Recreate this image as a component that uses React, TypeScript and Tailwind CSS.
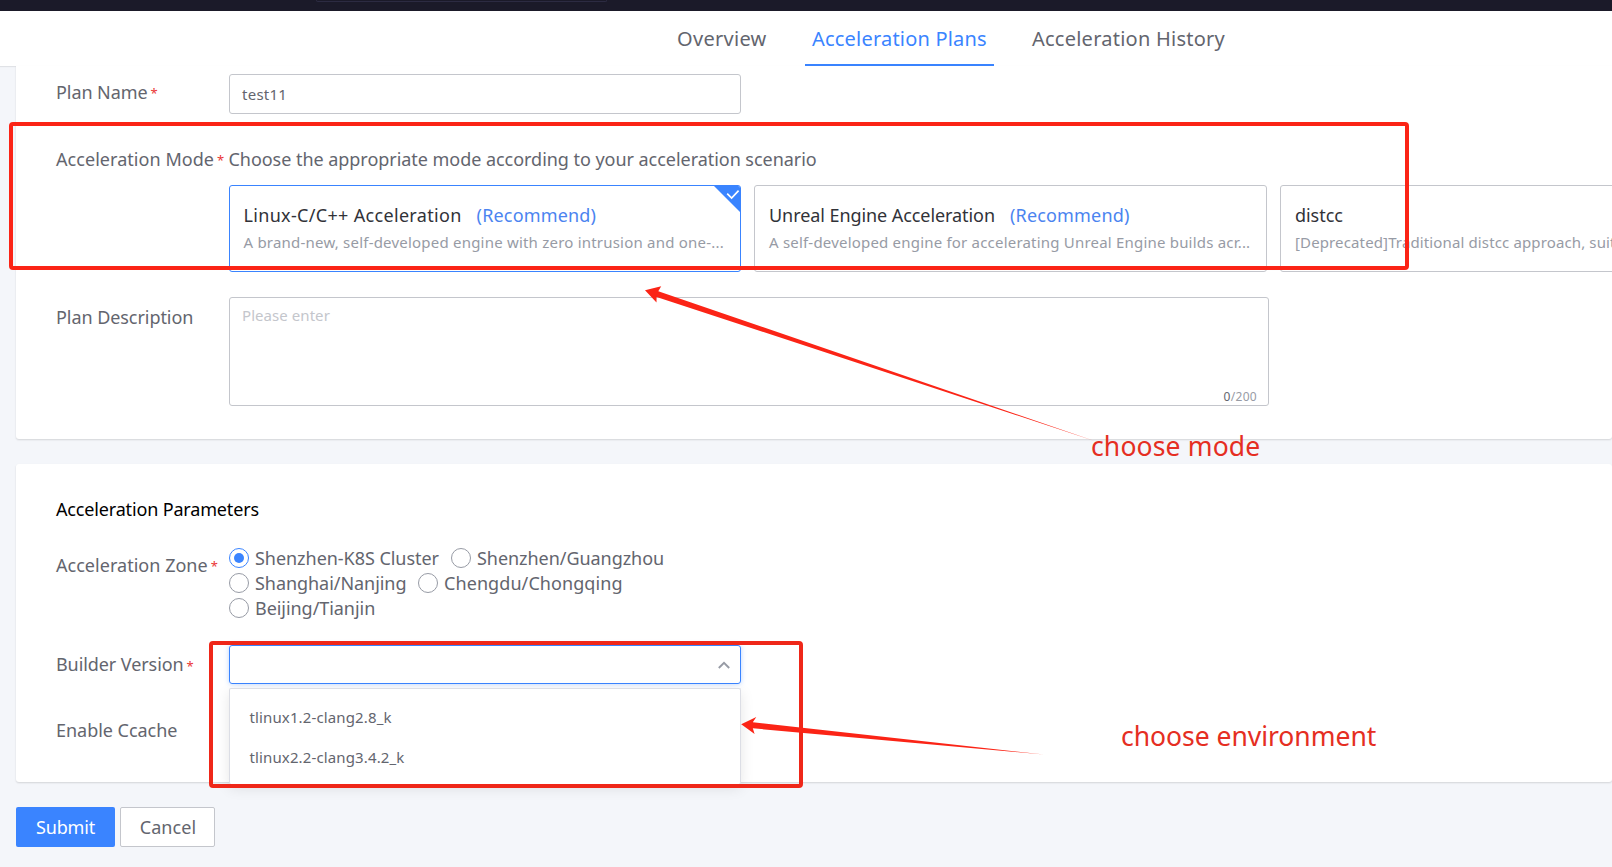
import React from "react";

const tabs = [
  { name: "Overview", box: "w-[105px]", text: "tracking-[0.3px] pl-2", active: false },
  { name: "Acceleration Plans", box: "w-[189px]", text: "tracking-[0.2px] pl-[7px]", active: true },
  { name: "Acceleration History", box: "w-[208px]", text: "tracking-[0.24px] pl-[7px]", active: false },
];

const modes = [
  {
    title: "Linux-C/C++ Acceleration",
    titleClass: "tracking-[0.32px]",
    recommend: true,
    desc: "A brand-new, self-developed engine with zero intrusion and one-...",
    descClass: "tracking-[0.21px]",
    selected: true,
  },
  {
    title: "Unreal Engine Acceleration",
    titleClass: "tracking-[-0.07px]",
    recommend: true,
    desc: "A self-developed engine for accelerating Unreal Engine builds acr...",
    descClass: "tracking-[0.2px]",
    selected: false,
  },
  {
    title: "distcc",
    titleClass: "tracking-[-0.05px]",
    recommend: false,
    desc: "[Deprecated]Traditional distcc approach, suitable for C/C++ builds",
    descClass: "tracking-[0.13px]",
    selected: false,
  },
];

const zones = [
  [
    { name: "Shenzhen-K8S Cluster", text: "w-[184px] tracking-[-0.04px]", checked: true },
    { name: "Shenzhen/Guangzhou", text: "tracking-[-0.05px]", checked: false },
  ],
  [
    { name: "Shanghai/Nanjing", text: "w-[151px] tracking-[-0.05px]", checked: false },
    { name: "Chengdu/Chongqing", text: "tracking-[0.08px]", checked: false },
  ],
  [{ name: "Beijing/Tianjin", text: "tracking-[-0.05px]", checked: false }],
];

const versions = ["tlinux1.2-clang2.8_k", "tlinux2.2-clang3.4.2_k"];

function Label({ text, required, className = "" }: { text: string; required?: boolean; className?: string }) {
  return (
    <div className={`flex w-[174px] shrink-0 items-center whitespace-nowrap pl-px ${className}`}>
      <span>{text}</span>
      {required && <span className="ml-[3px] pt-1 text-[13px] tracking-normal text-[#ea3636]">*</span>}
    </div>
  );
}

function Radio({ checked }: { checked: boolean }) {
  return (
    <span
      className={`flex size-5 shrink-0 items-center justify-center rounded-full border bg-white ${
        checked ? "border-[#3a84ff]" : "border-[#979ba5]"
      }`}
    >
      {checked && <span className="size-[10px] rounded-full bg-[#3a84ff]" />}
    </span>
  );
}

export default function App() {
  return (
    <div className="relative h-[867px] w-full overflow-hidden bg-[#f4f6fa] font-['Noto_Sans',sans-serif] text-[18px] text-[#63656e]">
      <header className="h-[11px] bg-[#1b1a29] pl-[316px]">
        <div className="h-[2px] w-[291px] rounded-b-sm border-x border-b border-[#2c2b42]" />
      </header>

      <nav className="flex h-[55px] gap-[31px] bg-white pl-[669px] text-[20px] shadow-[0_1px_1px_rgba(0,0,0,0.08)]">
        {tabs.map((tab) => (
          <a
            key={tab.name}
            className={`flex h-[55px] items-start whitespace-nowrap border-b-2 pt-[13px] leading-[30px] ${tab.box} ${tab.text} ${
              tab.active ? "border-[#3a84ff] text-[#3a84ff]" : "border-transparent"
            }`}
          >
            {tab.name}
          </a>
        ))}
      </nav>

      <main className="relative ml-4">
        <section className="h-[373px] rounded-b-[3px] bg-white pl-[39px] pt-2 shadow-[0_1px_2px_rgba(0,0,0,0.14)]">
          <div className="flex">
            <Label text="Plan Name" required className="h-9 tracking-[-0.07px]" />
            <div className="flex h-10 w-[512px] items-center rounded-[3px] border border-[#c4c6cc] pl-3 text-[15px] tracking-[0.25px]">
              test11
            </div>
          </div>

          <div className="mt-[27px] flex">
            <Label text="Acceleration Mode" required className="h-9 tracking-[0.05px]" />
            <div className="min-w-0 flex-1">
              <p className="-ml-[0.5px] h-9 whitespace-nowrap leading-9 tracking-[-0.04px]">
                Choose the appropriate mode according to your acceleration scenario
              </p>
              <div className="mt-2 flex gap-[13px]">
                {modes.map((mode) => (
                  <div
                    key={mode.title}
                    className={`relative h-[87px] shrink-0 overflow-hidden rounded-[3px] border pt-[15px] ${
                      mode.selected ? "w-[512px] border-[#3a84ff] pl-[13.5px]" : "w-[513px] border-[#c4c6cc] pl-[14px]"
                    }`}
                  >
                    <div className="flex h-7 items-center gap-4 whitespace-nowrap">
                      <span className={`text-[#313238] ${mode.titleClass}`}>{mode.title}</span>
                      {mode.recommend && <span className="-ml-px tracking-[0.17px] text-[#4b84f0]">(Recommend)</span>}
                    </div>
                    <div className={`h-[26px] whitespace-nowrap text-[15px] leading-[26px] text-[#979ba5] ${mode.descClass}`}>
                      {mode.desc}
                    </div>
                    {mode.selected && (
                      <svg className="absolute -right-px top-0" width="27" height="27" viewBox="0 0 27 27">
                        <path d="M0 0H27V27Z" fill="#3a84ff" />
                        <path d="M13.2 7.6L17.6 12L24.6 4.6" fill="none" stroke="#fff" strokeWidth="1.7" />
                      </svg>
                    )}
                  </div>
                ))}
              </div>
            </div>
          </div>

          <div className="mt-[25px] flex">
            <Label text="Plan Description" className="mt-0.5 h-9 tracking-[-0.06px]" />
            <div className="flex h-[109px] w-[1040px] flex-col justify-between rounded-[3px] border border-[#c4c6cc] pl-3 pr-[11px] pt-[5px]">
              <span className="text-[15px] leading-6 tracking-[0.06px] text-[#c4c6cc]">Please enter</span>
              <span className="self-end text-[12px] leading-4 tracking-[0.3px] text-[#979ba5]">
                <span className="text-[#63656e]">0</span>/200
              </span>
            </div>
          </div>
        </section>

        <section className="mt-[25px] h-[318px] rounded-[3px] bg-white pl-[39px] pt-[33px] shadow-[0_1px_2px_rgba(0,0,0,0.14)]">
          <h2 className="h-6 pl-px leading-6 tracking-[-0.16px] text-black">Acceleration Parameters</h2>

          <div className="mt-[27px] flex">
            <Label text="Acceleration Zone" required className="h-[34px] tracking-[0.03px]" />
            <div className="flex flex-col gap-[5px]">
              {zones.map((row, i) => (
                <div key={i} className="flex gap-3">
                  {row.map((zone) => (
                    <label key={zone.name} className="flex h-5 items-center gap-[6px] whitespace-nowrap leading-5">
                      <Radio checked={zone.checked} />
                      <span className={zone.text}>{zone.name}</span>
                    </label>
                  ))}
                </div>
              ))}
            </div>
          </div>

          <div className="mt-[27px] flex h-[39px]">
            <Label text="Builder Version" required className="h-[39px] tracking-[-0.08px]" />
            <div className="relative flex h-[39px] w-[512px] items-center justify-end rounded-[3px] border border-[#3a84ff] pr-[10px] shadow-[0_0_5px_rgba(58,132,255,0.35)]">
              <svg width="12" height="8" viewBox="0 0 12 8" fill="none" stroke="#979ba5" strokeWidth="1.9">
                <path d="M0.8 7L6 1.8L11.2 7" />
              </svg>
              <ul className="absolute -left-px top-[42px] h-[96px] w-[512px] rounded-[2px] border border-b-0 border-[#dcdee5] bg-white pl-[19.5px] pt-2 text-[15px] tracking-[0.13px] shadow-[0_4px_14px_rgba(0,0,0,0.1)]">
                {versions.map((version) => (
                  <li key={version} className="h-10 leading-10">
                    {version}
                  </li>
                ))}
              </ul>
            </div>
          </div>

          <div className="mt-7 flex">
            <Label text="Enable Ccache" className="h-9 tracking-[-0.03px]" />
          </div>
        </section>

        <div className="mt-[25px] flex gap-[5px]">
          <button className="h-10 w-[99px] rounded-[2px] bg-[#3a84ff] tracking-[-0.15px] text-white">Submit</button>
          <button className="h-10 w-[95px] rounded-[2px] border border-[#c4c6cc] bg-white pl-px tracking-[0.1px]">Cancel</button>
        </div>
      </main>

      <div className="pointer-events-none absolute left-[9px] top-[122px] h-[148px] w-[1400px] rounded-[4px] border-4 border-[#fb2416]" />
      <div className="pointer-events-none absolute left-[209px] top-[641px] h-[147px] w-[594px] rounded-[4px] border-4 border-[#ef2719]" />
      <svg className="pointer-events-none absolute left-0 top-0" width="1612" height="867" viewBox="0 0 1612 867" fill="#fb2416">
        <path d="M645 290.3L661.2 286.3L658.3 291.2L1096 441.4L656.6 296.9L656.5 302.6Z" />
        <path d="M741.2 724.3L756.3 717L752.8 722.2L1044 754.6L752.8 728.3L754.6 734Z" />
      </svg>
      <span className="absolute left-[1091px] top-[428px] whitespace-nowrap text-[26.5px] leading-9 tracking-[0.15px] text-[#e52e22]">
        choose mode
      </span>
      <span className="absolute left-[1121px] top-[718px] whitespace-nowrap text-[26.5px] leading-9 tracking-[-0.03px] text-[#e52e22]">
        choose environment
      </span>
    </div>
  );
}
